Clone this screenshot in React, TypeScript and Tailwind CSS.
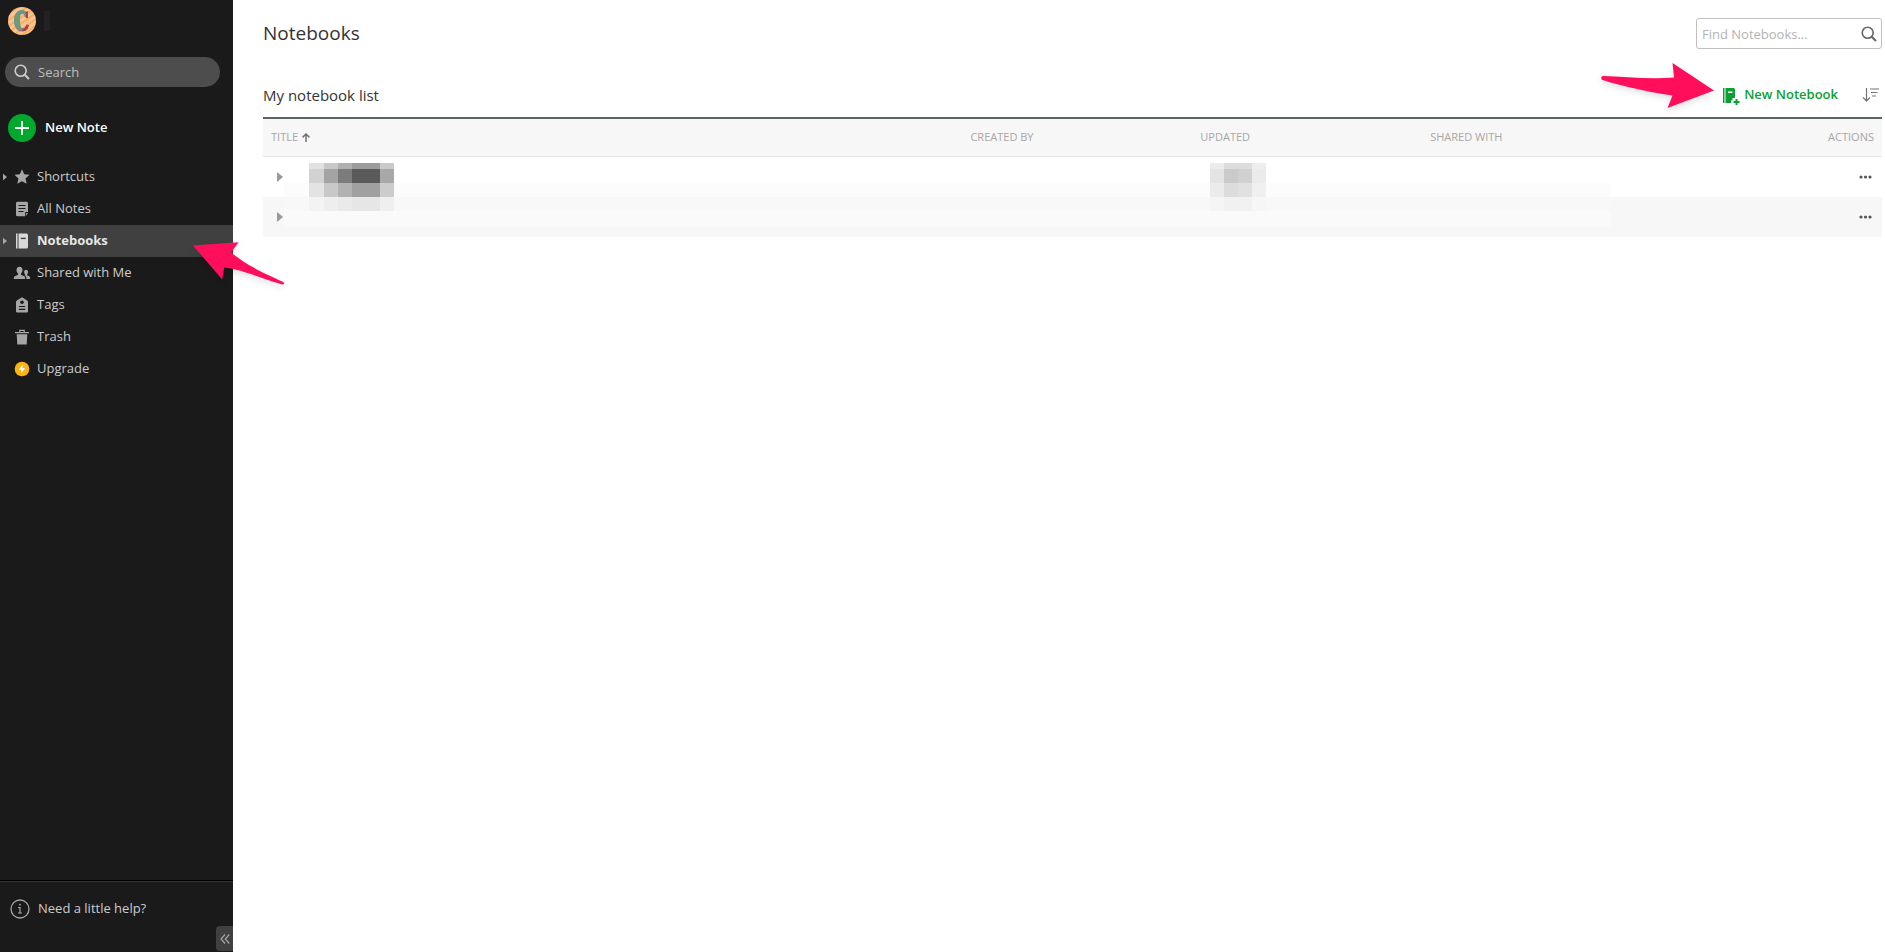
import React from "react";

type IconProps = { className?: string };

const StarIcon = () => (
  <svg width="16" height="16" viewBox="0 0 16 16" fill="currentColor" aria-hidden="true">
    <path d="M8 .3l2.200 4.900 5.300.6-4 3.600 1.200 5.400L8 12.200l-4.700 2.600 1.200-5.400-4-3.600 5.300-.6z" />
  </svg>
);
const NoteIcon = () => (
  <svg width="16" height="16" viewBox="0 0 16 16" aria-hidden="true">
    <path fill="currentColor" d="M3.500.8h9A1.500 1.500 0 0 1 14 2.300V11h-2.800v4.200H3.500A1.500 1.500 0 0 1 2 13.700V2.300A1.500 1.500 0 0 1 3.500.8zM12.200 12H14l-1.800 3z" />
    <path stroke="#1a1a1a" strokeWidth="1.200" d="M4.500 4.500h7M4.500 7.500h7M4.500 10.500h5" />
  </svg>
);
const NotebookIcon = () => (
  <svg width="16" height="16" viewBox="0 0 16 16" fill="currentColor" aria-hidden="true">
    <path d="M2 .5h1.500v15H2zM4.500.5h8A1.500 1.500 0 0 1 14 2v12a1.500 1.500 0 0 1-1.500 1.500h-8z" />
    <path fill="#404040" d="M6.800 4.700h5v1.400h-5z" />
  </svg>
);
const PeopleIcon = () => (
  <svg className="-ml-px" width="18" height="16" viewBox="0 0 18 16" fill="currentColor" aria-hidden="true">
    <path d="M6.500 1.800c2 0 3 1.400 3 3.300 0 1.500-.6 2.700-1.500 3.400v1.300l3.200 1.400c.8.400 1 1.100 1 2.800H.8c0-1.700.2-2.400 1-2.800L5 9.800V8.500c-.9-.7-1.500-1.900-1.500-3.400 0-1.900 1-3.300 3-3.300z" />
    <path d="M13 4.800c1.400 0 2.100 1 2.100 2.300 0 1-.4 1.800-1 2.300v.9l2 .9c.8.400 1 1.100 1 2.800h-3.700c0-1.900-.3-3-1.600-3.600l-.3-.2.500-.3v-.6c-.6-.5-.9-1.200-.9-2.200 0-1.300.6-2.300 1.900-2.300z" />
  </svg>
);
const TagIcon = () => (
  <svg width="16" height="16" viewBox="0 0 16 16" aria-hidden="true">
    <path fill="currentColor" d="M8 .3l4.800 3c.8.500 1.200 1 1.200 1.900v9a1.300 1.300 0 0 1-1.300 1.300H3.300A1.300 1.300 0 0 1 2 14.200v-9c0-.9.400-1.400 1.200-1.900z" />
    <circle cx="8" cy="5.300" r="1.800" fill="#1a1a1a" />
    <path stroke="#1a1a1a" strokeWidth="1.200" d="M4.800 9.500h6.400M4.800 12.300h6.400" />
  </svg>
);
const TrashIcon = () => (
  <svg width="16" height="16" viewBox="0 0 16 16" fill="currentColor" aria-hidden="true">
    <path d="M5.200.7h5.600v2.200H15v1.300H1V2.900h4.200zm1.200 1.200v1h3.200v-1zM2.700 5.300h10.600l-.6 10.200H3.300z" />
  </svg>
);
const UpgradeIcon = () => (
  <svg width="16" height="16" viewBox="0 0 16 16" aria-hidden="true">
    <circle cx="8" cy="8" r="7.300" fill="#fcb414" />
    <path fill="#fff" d="M8.800 3.500L4.800 8.700h2.700L7 12.500l4.200-5.300H8.400z" />
  </svg>
);
const SearchIcon = ({ className }: IconProps) => (
  <svg className={className} width="16" height="16" viewBox="0 0 16 16" fill="none" stroke="currentColor" strokeWidth="1.600" aria-hidden="true">
    <circle cx="6.700" cy="6.700" r="5.500" />
    <path d="M10.700 10.700l4.300 4.300" strokeWidth="2" />
  </svg>
);
const Caret = ({ className }: IconProps) => (
  <svg className={className} width="6" height="10" viewBox="0 0 6 10" fill="currentColor" aria-hidden="true">
    <path d="M0 0l6 5-6 5z" />
  </svg>
);

const navItems = [
  { label: "Shortcuts", icon: <StarIcon />, expandable: true },
  { label: "All Notes", icon: <NoteIcon /> },
  { label: "Notebooks", icon: <NotebookIcon />, expandable: true, active: true },
  { label: "Shared with Me", icon: <PeopleIcon /> },
  { label: "Tags", icon: <TagIcon /> },
  { label: "Trash", icon: <TrashIcon /> },
  { label: "Upgrade", icon: <UpgradeIcon /> },
];

type Block = [number, number, number, number, string];

const titleBlocks: Block[] = [
  [0, 0, 15, 6, "#e1e1e1"], [15, 0, 14, 6, "#c8c8c8"], [29, 0, 14, 6, "#b0b0b0"], [43, 0, 28, 6, "#9c9c9c"], [71, 0, 14, 6, "#cacaca"],
  [0, 6, 15, 14, "#d2d2d2"], [15, 6, 14, 14, "#a4a4a4"], [29, 6, 14, 14, "#7c7c7c"], [43, 6, 28, 14, "#5a5a5a"], [71, 6, 14, 14, "#a8a8a8"],
  [0, 20, 15, 14, "#e3e3e3"], [15, 20, 14, 14, "#c8c8c8"], [29, 20, 14, 14, "#b2b2b2"], [43, 20, 28, 14, "#a0a0a0"], [71, 20, 14, 14, "#cccccc"],
  [0, 34, 15, 14, "#f3f3f3"], [15, 34, 14, 14, "#eeeeee"], [29, 34, 14, 14, "#eaeaea"], [43, 34, 28, 14, "#e6e6e6"], [71, 34, 14, 14, "#efefef"],
];
const dateBlocks: Block[] = [
  [0, 0, 14, 6, "#ebebeb"], [14, 0, 28, 6, "#dcdcdc"], [42, 0, 14, 6, "#eeeeee"],
  [0, 6, 14, 14, "#e4e4e4"], [14, 6, 14, 14, "#cacaca"], [28, 6, 14, 14, "#d0d0d0"], [42, 6, 14, 14, "#ebebeb"],
  [0, 20, 14, 14, "#ebebeb"], [14, 20, 14, 14, "#dcdcdc"], [28, 20, 14, 14, "#e1e1e1"], [42, 20, 14, 14, "#f0f0f0"],
  [0, 34, 14, 14, "#f5f5f5"], [14, 34, 28, 14, "#f1f1f1"], [42, 34, 14, 14, "#f6f6f6"],
];

const Mosaic = ({ blocks, className }: { blocks: Block[]; className: string }) => (
  <svg className={className} width="85" height="48" viewBox="0 0 85 48" shapeRendering="crispEdges" aria-hidden="true">
    {blocks.map(([x, y, w, h, fill]) => (
      <rect key={`${x}-${y}`} x={x} y={y} width={w} height={h} fill={fill} />
    ))}
  </svg>
);

const RowMenu = () => (
  <button type="button" aria-label="More actions" className="ml-auto flex h-5 items-center text-[#555]">
    <svg width="13" height="4" viewBox="0 0 13 4" fill="currentColor" aria-hidden="true">
      <circle cx="2" cy="2" r="1.600" />
      <circle cx="6.500" cy="2" r="1.600" />
      <circle cx="11" cy="2" r="1.600" />
    </svg>
  </button>
);

export default function App() {
  return (
    <div className="relative flex min-h-screen bg-white font-['Open_Sans','Noto_Sans',sans-serif]">
      <aside className="flex w-[233px] shrink-0 flex-col bg-[#1a1a1a] text-[#ccc]">
        <div className="flex h-[42px] items-center gap-2 pl-2">
          <svg width="28" height="28" viewBox="0 0 28 28" role="img" aria-label="Account">
            <defs>
              <pattern id="stripes" width="5" height="5" patternUnits="userSpaceOnUse" patternTransform="rotate(55)">
                <rect width="5" height="5" fill="#fac3a0" />
                <rect width="2" height="5" fill="#fbb04e" />
              </pattern>
            </defs>
            <circle cx="14" cy="14" r="14" fill="url(#stripes)" />
            <path d="M20 4v7h-2c-.5-3-1.500-4.500-3.500-4.500-2.500 0-3.500 3-3.500 7.500s1 7.500 3.500 7.500c2 0 3-1.500 4-4l2.500.5c-.5 3.500-2.500 6.500-6.500 6.500-5 0-8-4-8-10.500S9.500 3.500 14.500 3.500c1.500 0 2.500.5 3.500 1.500z" fill="#a53f5c" />
            <path d="M18 3.500v6.500h-1.500c-.5-3-1.200-4-2.800-4-1.200 0-1.700 3-1.700 7.500s.8 7 2 7.500l.5 3C9 24 6 19.500 6 13.500S9 3 13.500 3c1.500 0 2.500.3 3.500 1.500z" fill="#6a9a80" />
          </svg>
          <span className="h-5 w-1.5 bg-[#222]" />
        </div>

        <label className="ml-[5px] mr-[13px] mt-[15px] flex h-[30px] items-center gap-2 rounded-full bg-[#4d4d4d] pl-[9px]">
          <SearchIcon className="shrink-0" />
          <input aria-label="Search" placeholder="Search" className="w-full min-w-0 bg-transparent text-[13px] leading-5 text-[#ccc] outline-none placeholder:text-[#bfbfbf]" />
        </label>

        <button type="button" className="mt-[27px] flex h-7 items-center gap-[9px] pl-2 text-left text-[13px] font-semibold text-white">
          <svg width="28" height="28" viewBox="0 0 28 28" aria-hidden="true">
            <circle cx="14" cy="14" r="14" fill="#00a82d" />
            <path d="M14 7v14M7 14h14" stroke="#fff" strokeWidth="1.800" />
          </svg>
          New Note
        </button>

        <nav className="mt-[19px]">
          {navItems.map(({ label, icon, expandable, active }) => (
            <a
              key={label}
              href="#"
              className={
                active
                  ? "flex h-8 items-center bg-[#404040] text-[13px] font-bold text-[#e6e6e6]"
                  : "flex h-8 items-center text-[13px] text-[#ccc]"
              }
            >
              <span className="flex w-3 shrink-0 pl-[3px]">{expandable && <Caret className="h-2 w-1 text-[#a6a6a6]" />}</span>
              <span className={active ? "flex w-[25px] shrink-0 pl-0.5 text-[#d9d9d9]" : "flex w-[25px] shrink-0 pl-0.5 text-[#a6a6a6]"}>{icon}</span>
              {label}
            </a>
          ))}
        </nav>

        <footer className="mt-auto border-t border-black">
          <div className="flex h-[71px] flex-col border-t border-[#333]">
            <a href="#" className="flex items-start gap-2 pl-2.5 pt-4 text-[13px] leading-5">
              <svg className="mt-px" width="20" height="20" viewBox="0 0 20 20" fill="none" stroke="#a6a6a6" aria-hidden="true">
                <circle cx="10" cy="10" r="9" strokeWidth="1.300" />
                <path d="M8 8.500h2v5.500M8 14h4" strokeWidth="1.200" />
                <circle cx="10" cy="5.700" r=".6" />
              </svg>
              Need a little help?
            </a>
            <button type="button" aria-label="Collapse sidebar" className="mb-px ml-auto mt-auto flex h-[25px] w-[17px] items-center justify-center rounded-l bg-[#404040] text-[#a6a6a6]">
              <svg width="10" height="10" viewBox="0 0 10 10" fill="none" stroke="currentColor" strokeWidth="1.200" aria-hidden="true">
                <path d="M5 .5L1 5l4 4.500M9.300.5l-4 4.500 4 4.500" />
              </svg>
            </button>
          </div>
        </footer>
      </aside>

      <main className="min-w-0 flex-1 pl-[30px] pr-[3px] text-[#333]">
        <header className="flex h-[67px] items-center justify-between">
          <h1 className="text-[19px]">Notebooks</h1>
          <label className="flex h-[31px] w-[186px] items-center rounded-[3px] border border-[#bfbfbf] pl-[5px] pr-1 text-[#666]">
            <input aria-label="Find Notebooks" placeholder="Find Notebooks..." className="w-full min-w-0 text-[13px] leading-5 outline-none placeholder:text-[#b3b3b3]" />
            <SearchIcon className="shrink-0" />
          </label>
        </header>

        <div className="flex h-[50px] items-center justify-between pt-1.5">
          <h2 className="text-[15px] font-medium">My notebook list</h2>
          <div className="flex items-center gap-6 pr-0.5">
            <button type="button" className="flex items-center gap-1 text-[13px] font-semibold text-[#0ba033]">
              <svg className="mt-0.5" width="18" height="18" viewBox="0 0 18 18" fill="currentColor" aria-hidden="true">
                <path d="M1 1h1.500v15H1zM3.500 1h8A1.500 1.500 0 0 1 13 2.500V11h-2.500v2.500H9V16H3.500z" />
                <path fill="#fff" d="M6 4.500h4.500V6H6z" />
                <path d="M13.500 12h2v2h2v2h-2v2h-2v-2h-2v-2h2z" />
              </svg>
              New Notebook
            </button>
            <button type="button" aria-label="Sort" className="text-[#737373]">
              <svg width="18" height="16" viewBox="0 0 18 16" fill="none" stroke="currentColor" strokeWidth="1.200" aria-hidden="true">
                <path d="M4.500 1v13M1 10.500L4.500 14 8 10.500M8 2h9M9 5.500h6.500M10 9h4" />
              </svg>
            </button>
          </div>
        </div>

        <div className="relative border-t-2 border-[#5a6464]">
          <table className="w-full table-fixed border-collapse text-left">
            <colgroup>
              <col />
              <col className="w-[14.2%]" />
              <col className="w-[14.2%]" />
              <col className="w-[14.2%]" />
              <col className="w-[14.2%]" />
            </colgroup>
            <thead>
              <tr className="h-[37px] border-b border-[#e6e6e6] bg-[#f7f7f7] text-[11px] text-[#a6a6a6]">
                <th className="px-2 font-normal">
                  <span className="flex items-center gap-1">
                    TITLE
                    <svg width="8" height="9" viewBox="0 0 8 9" fill="none" stroke="#737373" strokeWidth="1.500" aria-hidden="true">
                      <path d="M4 9V1M.6 4.400L4 1l3.400 3.400" />
                    </svg>
                  </span>
                </th>
                <th className="px-2 font-normal">CREATED BY</th>
                <th className="px-2 font-normal">UPDATED</th>
                <th className="px-2 font-normal">SHARED WITH</th>
                <th className="px-2 text-right font-normal">ACTIONS</th>
              </tr>
            </thead>
            <tbody>
              <tr className="h-[41px]">
                <td className="relative pl-3.5">
                  <button type="button" aria-label="Expand notebook" className="flex text-[#999]"><Caret /></button>
                  <Mosaic blocks={titleBlocks} className="absolute left-[46px] top-1.5 z-10" />
                </td>
                <td />
                <td className="relative"><Mosaic blocks={dateBlocks} className="absolute left-[18px] top-1.5 z-10" /></td>
                <td />
                <td className="pr-2.5"><RowMenu /></td>
              </tr>
              <tr className="h-10 bg-[#f7f7f7]">
                <td className="pl-3.5"><button type="button" aria-label="Expand notebook" className="flex text-[#999]"><Caret /></button></td>
                <td />
                <td />
                <td />
                <td className="pr-2.5"><RowMenu /></td>
              </tr>
            </tbody>
          </table>
          <div className="pointer-events-none absolute bottom-2.5 left-[21px] right-[271px]">
            <div className="h-3.5 bg-[#fcfcfc]" />
            <div className="h-3.5 bg-[#f8f8f8]" />
            <div className="h-4 bg-[#fafafa]" />
          </div>
        </div>
      </main>

      <svg className="pointer-events-none absolute left-[185px] top-[235px] drop-shadow-md" width="110" height="60" viewBox="185 235 110 60" fill="#ff0f5b" aria-hidden="true">
        <path d="M193 245.500l45.500-3.200-7.300 10.200c17 14 32 20 52 29.500 1.500 1 .8 3-1 2.500-20-5-37-14.500-58-17l-2 12z" />
      </svg>
      <svg className="pointer-events-none absolute right-[165px] top-[55px] drop-shadow-md" width="130" height="65" viewBox="1590 55 130 65" fill="#ff0f5b" aria-hidden="true">
        <path d="M1714 90.500L1667.500 108l5-12.500c-22-3-49-9-70-15.500-2-1-1.500-4 .5-4 22 .5 45 3.500 71 1.500l-1.500-14.500z" />
      </svg>
    </div>
  );
}
